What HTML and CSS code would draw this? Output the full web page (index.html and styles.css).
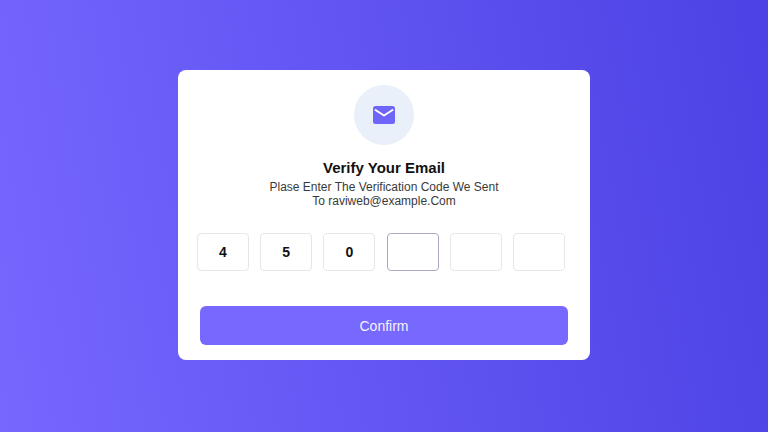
FILE: index.html
```html
<!DOCTYPE html>
<html lang="en">
  <head>
    <meta charset="UTF-8" />
    <meta name="viewport" content="width=device-width, initial-scale=1.0" />
    <title>Verify Your Email</title>
    <link rel="stylesheet" href="styles.css">
  </head>
  <body>
    <div class="card">
      <div class="icon">
        <svg width="22" height="18" viewBox="0 0 22 18">
          <rect width="22" height="18" rx="2.5" fill="#7065fb" />
          <path d="M2.5 4 L11 9.5 L19.5 4" fill="none" stroke="#fff" stroke-width="2" stroke-linecap="round" stroke-linejoin="round" />
        </svg>
      </div>
      <h1>Verify Your Email</h1>
      <p>Plase Enter The Verification Code We Sent<br />To raviweb@example.Com</p>
      <div class="code">
        <input type="text" value="4" />
        <input type="text" value="5" />
        <input type="text" value="0" />
        <input type="text" class="active" />
        <input type="text" />
        <input type="text" />
      </div>
      <button>Confirm</button>
    </div>
  </body>
</html>
```

FILE: styles.css
```css
* {
  box-sizing: border-box;
  margin: 0;
  padding: 0;
}
body {
  height: 100vh;
  width: 100%;
  overflow: hidden;
  padding-bottom: 2px;
  background: linear-gradient(80deg, #7667ff, #4c41e4);
  font-family: "Liberation Sans", Arial, sans-serif;
  display: flex;
  justify-content: center;
  align-items: center;
}
.card {
  width: 412px;
  height: 290px;
  padding: 15px 19px 0;
  background-color: #fff;
  border-radius: 8px;
  display: flex;
  flex-direction: column;
  align-items: center;
}
.icon {
  width: 60px;
  height: 60px;
  border-radius: 50%;
  background-color: #e9f0fa;
  display: flex;
  justify-content: center;
  align-items: center;
}
h1 {
  margin-top: 14px;
  font-size: 15px;
  line-height: 18px;
  color: #111;
}
p {
  margin-top: 3px;
  font-size: 12px;
  line-height: 14.4px;
  text-align: center;
  color: #3a3a3a;
}
.code {
  width: 368px;
  margin-top: 24.2px;
  align-self: flex-start;
  display: flex;
  justify-content: space-between;
}
input {
  width: 52px;
  height: 38px;
  border: 1px solid #e6e6ec;
  border-radius: 4px;
  outline: none;
  background-color: #fff;
  font-family: inherit;
  font-size: 14px;
  font-weight: bold;
  text-align: center;
  color: #111;
}
input.active {
  border: 1.5px solid #a9a9c6;
}
button {
  width: 368px;
  height: 39px;
  margin-top: 35px;
  border: none;
  border-radius: 6px;
  background-color: #7768fe;
  font-family: inherit;
  font-size: 14px;
  color: #f4f2ff;
}
```
